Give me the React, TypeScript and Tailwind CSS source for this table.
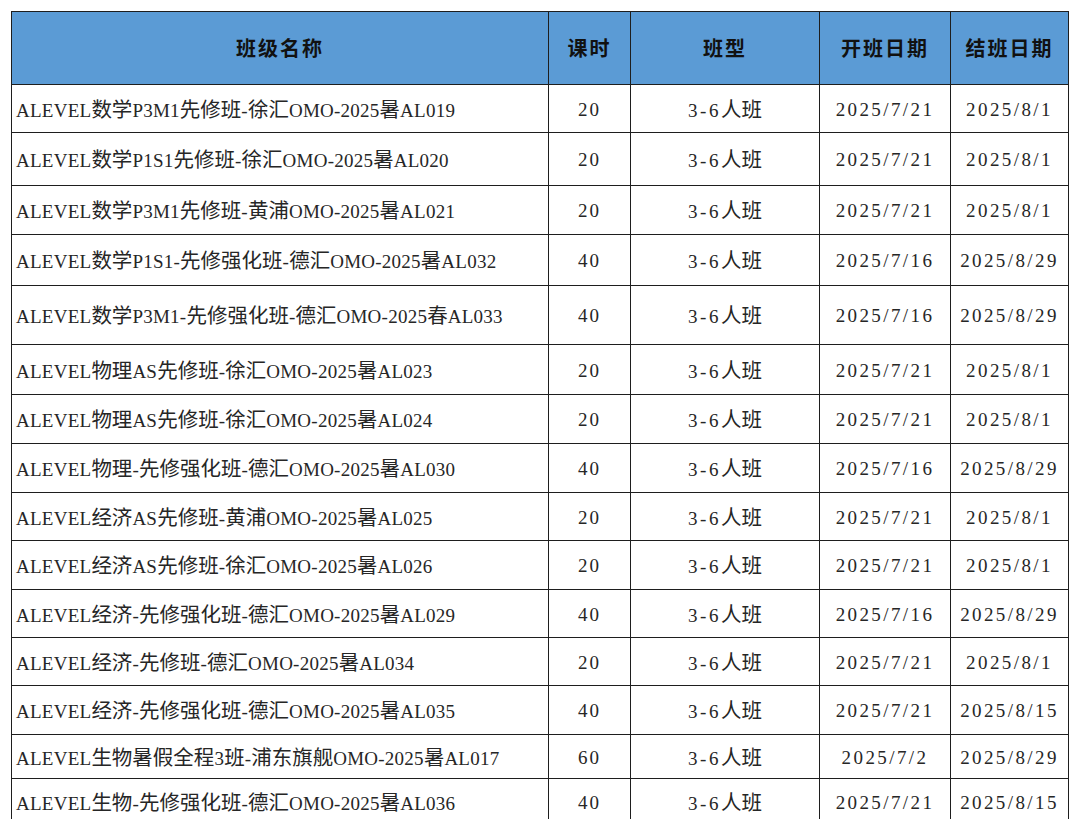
import { type ReactNode } from "react";

type Row = {
    name: string
    hours: number
    type: string
    start: string
    end: string
    h: string
}

const rows: Row[] = [
    { name: "ALEVEL数学P3M1先修班-徐汇OMO-2025暑AL019", hours: 20, type: "3-6人班", start: "2025/7/21", end: "2025/8/1", h: "h-[48px]" },
    { name: "ALEVEL数学P1S1先修班-徐汇OMO-2025暑AL020", hours: 20, type: "3-6人班", start: "2025/7/21", end: "2025/8/1", h: "h-[53px]" },
    { name: "ALEVEL数学P3M1先修班-黄浦OMO-2025暑AL021", hours: 20, type: "3-6人班", start: "2025/7/21", end: "2025/8/1", h: "h-[49px]" },
    { name: "ALEVEL数学P1S1-先修强化班-德汇OMO-2025暑AL032", hours: 40, type: "3-6人班", start: "2025/7/16", end: "2025/8/29", h: "h-[51px]" },
    { name: "ALEVEL数学P3M1-先修强化班-德汇OMO-2025春AL033", hours: 40, type: "3-6人班", start: "2025/7/16", end: "2025/8/29", h: "h-[59px]" },
    { name: "ALEVEL物理AS先修班-徐汇OMO-2025暑AL023", hours: 20, type: "3-6人班", start: "2025/7/21", end: "2025/8/1", h: "h-[50px]" },
    { name: "ALEVEL物理AS先修班-徐汇OMO-2025暑AL024", hours: 20, type: "3-6人班", start: "2025/7/21", end: "2025/8/1", h: "h-[49px]" },
    { name: "ALEVEL物理-先修强化班-德汇OMO-2025暑AL030", hours: 40, type: "3-6人班", start: "2025/7/16", end: "2025/8/29", h: "h-[49px]" },
    { name: "ALEVEL经济AS先修班-黄浦OMO-2025暑AL025", hours: 20, type: "3-6人班", start: "2025/7/21", end: "2025/8/1", h: "h-[48px]" },
    { name: "ALEVEL经济AS先修班-徐汇OMO-2025暑AL026", hours: 20, type: "3-6人班", start: "2025/7/21", end: "2025/8/1", h: "h-[49px]" },
    { name: "ALEVEL经济-先修强化班-德汇OMO-2025暑AL029", hours: 40, type: "3-6人班", start: "2025/7/16", end: "2025/8/29", h: "h-[48px]" },
    { name: "ALEVEL经济-先修班-德汇OMO-2025暑AL034", hours: 20, type: "3-6人班", start: "2025/7/21", end: "2025/8/1", h: "h-[48px]" },
    { name: "ALEVEL经济-先修强化班-德汇OMO-2025暑AL035", hours: 40, type: "3-6人班", start: "2025/7/21", end: "2025/8/15", h: "h-[49px]" },
    { name: "ALEVEL生物暑假全程3班-浦东旗舰OMO-2025暑AL017", hours: 60, type: "3-6人班", start: "2025/7/2", end: "2025/8/29", h: "h-[44px]" },
    { name: "ALEVEL生物-先修强化班-德汇OMO-2025暑AL036", hours: 40, type: "3-6人班", start: "2025/7/21", end: "2025/8/15", h: "h-[47px]" },
]

const headers = ["班级名称", "课时", "班型", "开班日期", "结班日期"]

// chinese runs get a slightly larger size than the serif latin text
function Mixed({ text }: { text: string }): ReactNode {
    const parts = text.split(/([\u4e00-\u9fff]+)/).filter((p) => p.length > 0)
    return (
        <>
            {parts.map((p, i) =>
                /[\u4e00-\u9fff]/.test(p) ? (
                    <span key={i} className="text-[20.5px] tracking-normal">{p}</span>
                ) : (
                    <span key={i}>{p}</span>
                )
            )}
        </>
    )
}

export default function App(): ReactNode {
    const cell = "border-[1.5px] border-[#1e1e1e] p-0 align-middle"
    const body = "border-[1.5px] border-[#1e1e1e] p-0 pt-[3px] align-middle"

    return (
        <div className="h-[819px] w-[1080px] overflow-hidden bg-white pl-[11px] pt-[11px]">
            <table className="w-[1057px] table-fixed border-collapse font-['Liberation_Serif','Noto_Sans_CJK_SC',serif] text-[19px] text-[#262626]">
                <colgroup>
                    <col className="w-[537px]" />
                    <col className="w-[82px]" />
                    <col className="w-[189px]" />
                    <col className="w-[131px]" />
                    <col className="w-[118px]" />
                </colgroup>
                <thead>
                    <tr className="h-[73px]">
                        {headers.map((h) => (
                            <th
                                key={h}
                                className={`${cell} bg-[#5b9bd5] text-center font-['Noto_Sans_CJK_SC',sans-serif] text-[20px] font-bold tracking-[2px] text-[#111]`}
                            >
                                {h}
                            </th>
                        ))}
                    </tr>
                </thead>
                <tbody>
                    {rows.map((r) => (
                        <tr key={r.name} className={r.h}>
                            <td className={`${body} whitespace-nowrap pl-[4px] text-left tracking-[0.25px]`}>
                                <Mixed text={r.name} />
                            </td>
                            <td className={`${body} text-center tracking-[2px]`}>{r.hours}</td>
                            <td className={`${body} text-center tracking-[2.5px]`}>
                                <Mixed text={r.type} />
                            </td>
                            <td className={`${body} text-center tracking-[2.4px]`}>{r.start}</td>
                            <td className={`${body} text-center tracking-[2.4px]`}>{r.end}</td>
                        </tr>
                    ))}
                </tbody>
            </table>
        </div>
    )
}
